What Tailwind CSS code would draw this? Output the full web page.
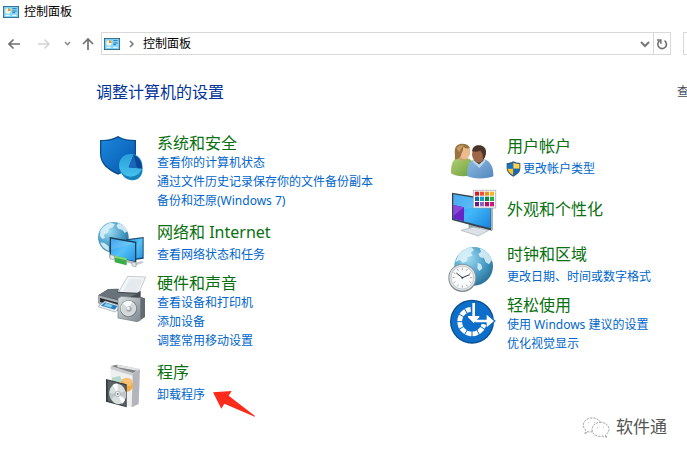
<!DOCTYPE html>
<html lang="zh-CN">
<head>
  <meta charset="UTF-8" />
  <title>控制面板</title>
  <meta name="viewport" content="width=device-width, initial-scale=1.0" />
  <script src="https://cdn.jsdelivr.net/npm/@tailwindcss/browser@4"></script>
</head>
<body class="relative min-h-screen overflow-hidden bg-white text-xs text-black font-['Noto_Sans','Noto_Sans_CJK_SC',sans-serif]">
  <!-- shared panel icon -->
  <svg class="hidden">
    <symbol id="panel" viewBox="0 0 48 36">
      <rect x="1" y="1" width="46" height="34" fill="#6fc7ee" stroke="#245f86" stroke-width="3" />
      <rect x="4" y="4" width="40" height="28" fill="#8bd8f8" />
      <circle cx="15" cy="15" r="8" fill="#f4f4e0" />
      <path d="M15 15V6a9 9 0 0 1 8 9z" fill="#e99a2c" />
      <path d="M28 8h13M28 15h13M28 20h8" stroke="#2478ae" stroke-width="3" />
      <path d="M8 28h12M28 28h12" stroke="#f7fdff" stroke-width="3" />
    </symbol>
  </svg>

  <header class="flex h-6 items-center gap-[5px] pl-[3px]">
    <svg class="h-3 w-4"><use href="#panel" /></svg>
    <h1>控制面板</h1>
  </header>

  <nav class="mt-2 flex h-[23px] items-center">
    <div class="flex w-[101px] shrink-0 items-center pl-2">
      <button aria-label="后退"><svg class="h-3 w-3" viewBox="0 0 12 12" fill="none" stroke="#707070" stroke-width="1.6"><path d="M12 6H1M5.500 1.500L1 6l4.500 4.500" /></svg></button>
      <button aria-label="前进" class="ml-[18px]"><svg class="h-3 w-3" viewBox="0 0 12 12" fill="none" stroke="#d2d2d2" stroke-width="1.500"><path d="M0 6h11M6.500 1.500L11 6l-4.500 4.500" /></svg></button>
      <button aria-label="最近浏览的位置" class="ml-3.5"><svg class="h-2 w-2" viewBox="0 0 8 8" fill="none" stroke="#888" stroke-width="1.500"><path d="M1 2l2.500 2.700L6 2" /></svg></button>
      <button aria-label="向上" class="ml-2.5"><svg class="h-3 w-3" viewBox="0 0 12 12" fill="none" stroke="#707070" stroke-width="1.700"><path d="M6 12V1M1 6l5-5 5 5" /></svg></button>
    </div>
    <div class="flex h-full flex-1 items-center border border-[#d9d9d9] pl-[2px]">
      <svg class="h-3 w-4"><use href="#panel" /></svg>
      <svg class="ml-2 h-2 w-2" viewBox="0 0 8 8" fill="none" stroke="#777" stroke-width="1.500"><path d="M2 1l3 3-3 3" /></svg>
      <a href="#" class="ml-[7px] leading-5">控制面板</a>
      <button aria-label="以前的位置" class="ml-auto mr-[3px]"><svg class="h-2 w-2.5" viewBox="0 0 10 8" fill="none" stroke="#777" stroke-width="2"><path d="M1 2l4 4 4-4" /></svg></button>
      <button aria-label="刷新" class="flex h-full w-[17px] items-center justify-center border-l border-[#d9d9d9]">
        <svg class="h-3 w-3" viewBox="0 0 12 12" fill="none" stroke="#707070" stroke-width="1.600"><path d="M8.500 2.700a4.300 4.300 0 1 1-5 .2M1 2h3.800v3.800" /></svg>
      </button>
    </div>
    <input type="search" aria-label="搜索控制面板" class="ml-3 h-full w-1 border border-r-0 border-[#d9d9d9]" />
  </nav>

  <main class="pl-24">
    <div class="flex h-5 mt-[27px] items-center justify-between">
      <h2 class="text-base leading-5 text-[#003399]">调整计算机的设置</h2>
      <span class="w-2.5 overflow-hidden whitespace-nowrap leading-5 text-[#444c58]">查看方式:</span>
    </div>

    <div class="mt-[31px] grid grid-cols-[350fr_241fr] text-[#0066cc]">
      <ul class="flex flex-col gap-[9px] whitespace-nowrap">
        <li class="flex gap-[13px]">
          <svg class="-mb-1.5 h-12 w-12 shrink-0 overflow-visible" viewBox="18 24 144 144">
            <defs>
              <linearGradient id="shield" x1="0" y1="0" x2="1" y2="1"><stop stop-color="#1988dc" /><stop offset="1" stop-color="#0757ad" /></linearGradient>
              <linearGradient id="disk" x1="0" y1="0" x2="0" y2="1"><stop stop-color="#2a9fdc" /><stop offset="1" stop-color="#45c0ec" /></linearGradient>
            </defs>
            <path d="M30 45C52 46 68 41 84 33c16 9 32 12 54 12v42c0 30-24 49-54 62-30-13-54-32-54-62z" fill="#084e8d" />
            <path d="M34 48c20 1 36-3 50-10 15 7 30 10 50 10v39c0 27-21 44-50 57-29-13-50-30-50-57z" fill="url(#shield)" />
            <path d="M88 124c2 34 32 50 55 38 13-8 17-23 13-38z" fill="#1784bd" />
            <ellipse cx="122" cy="121" rx="35" ry="34" fill="url(#disk)" />
            <path d="M116 127l15-38c16 6 26 22 26 42z" fill="#0a4893" />
            <path d="M116 127l15-38 10 40z" fill="#1966ba" />
          </svg>
          <div class="pb-[3px]">
            <h3 class="text-base leading-5 text-[#08700f]"><a href="#">系统和安全</a></h3>
            <a href="#" class="block leading-[19px]">查看你的计算机状态</a>
            <a href="#" class="block leading-[19px]">通过文件历史记录保存你的文件备份副本</a>
            <a href="#" class="block leading-[19px]">备份和还原(Windows 7)</a>
          </div>
        </li>
        <li class="flex gap-[13px]">
          <svg class="-mb-1.5 h-12 w-12 shrink-0 overflow-visible" viewBox="18 21 144 144">
            <defs>
              <radialGradient id="globe" cx=".35" cy=".3" r=".8"><stop stop-color="#a4dcf2" /><stop offset=".55" stop-color="#4a9fc9" /><stop offset="1" stop-color="#25698f" /></radialGradient>
              <linearGradient id="screen" x1="0" y1="0" x2="1" y2="1"><stop stop-color="#2695e8" /><stop offset=".5" stop-color="#55c1f8" /><stop offset="1" stop-color="#2493e0" /></linearGradient>
            </defs>
            <circle cx="70" cy="67" r="46" fill="url(#globe)" />
            <path d="M31 47c8-13 20-22 33-24l11 5-8 10-10 3-4 12-11 6 3 9-7 4-8-8zM85 24c14 5 23 13 28 25l-9 5-7-9-11-3-7-9zM31 82l12 2 13 10 1 15C43 103 34 94 31 82z" fill="#e1f3f9" opacity=".85" />
            <path d="M108 73l53-7v65l-53 8z" fill="#1b4b70" />
            <path d="M112 76l46-6v57l-46 7z" fill="url(#screen)" />
            <path d="M59 66l80 14v65l-80-18z" fill="#173e5c" />
            <path d="M63 71l72 13v55l-72-16z" fill="url(#screen)" />
            <path d="M63 71l72 13-72 20z" fill="#fff" opacity=".14" />
            <path d="M59 125l84 22" stroke="#b8c0c4" stroke-width="8" />
            <path d="M74 122l36 8v21l-36-9z" fill="#38ad48" />
            <path d="M74 122l36 8v6l-36-8z" fill="#7bdb7c" />
            <path d="M60 119l13 3v13l-13-4zM126 140l12 4v12l-12-4z" fill="#e4e8e9" stroke="#929b9f" stroke-width="2" />
            <path d="M140 142l17-4 4 5-18 6z" fill="#c5cbd0" />
          </svg>
          <div>
            <h3 class="mb-[3px] text-base leading-5 text-[#08700f]"><a href="#">网络和 Internet</a></h3>
            <a href="#" class="block leading-[19px]">查看网络状态和任务</a>
          </div>
        </li>
        <li class="flex gap-[13px]">
          <svg class="-mb-1.5 h-12 w-12 shrink-0 overflow-visible" viewBox="18 174 144 144">
            <defs>
              <linearGradient id="steel" x1="0" y1="0" x2="1" y2="1"><stop stop-color="#dce1e4" /><stop offset="1" stop-color="#7d878d" /></linearGradient>
            </defs>
            <path d="M113 184l54 2-22 51-61-3z" fill="#f3f6f8" stroke="#a9b0b5" stroke-width="2" />
            <path d="M119 191l40 1-17 39-43-2z" fill="#e4eaee" />
            <path d="M25 241l30-19 31-1-2 9 58 3 10-6v49l-67 11-60-24z" fill="#444d53" />
            <path d="M25 241l30-19 31 1-4 10 60 4-50 18z" fill="#687279" />
            <path d="M25 241l66 16v31l-66-20z" fill="#a5adb2" />
            <path d="M30 249l56 15v12l-56-15z" fill="#242b30" />
            <path d="M45 258l47 14-16 19-52-16z" fill="#f2f5f7" stroke="#98a2a9" stroke-width="2" />
            <path d="M45 262l38 11-9 11-41-12z" fill="#2e7fc2" />
            <path d="M48 264l20 6-5 8-22-6z" fill="#82cbe8" />
            <path d="M136 251l15-6 14 5v56l-13 9z" fill="#626b70" />
            <path d="M84 250l11-6 57 5-1 67-10 4-57-11z" fill="url(#steel)" stroke="#727a7e" stroke-width="2" />
            <circle cx="116" cy="281" r="26" fill="#7c878d" />
            <circle cx="115" cy="280" r="22" fill="#d1d7da" stroke="#f5f7f8" stroke-width="2" />
            <path d="M98 266a22 22 0 0 1 29-4l-12 18z" fill="#f8fafb" />
            <circle cx="117" cy="282" r="8" fill="#a0a9ad" />
            <circle cx="115" cy="280" r="5" fill="#eef1f2" />
          </svg>
          <div class="pb-[3px]">
            <h3 class="text-base leading-5 text-[#08700f]"><a href="#">硬件和声音</a></h3>
            <a href="#" class="block leading-[19px]">查看设备和打印机</a>
            <a href="#" class="block leading-[19px]">添加设备</a>
            <a href="#" class="block leading-[19px]">调整常用移动设置</a>
          </div>
        </li>
        <li class="flex gap-[13px]">
          <svg class="-mb-1.5 h-12 w-12 shrink-0 overflow-visible" viewBox="18 36 144 144">
            <path d="M62 50l66 19-3 103-63-26z" fill="#efeff0" />
            <path d="M62 48l20-4 67 14-22 12z" fill="#7d8185" />
            <path d="M82 44l68 12v8l-68-12z" fill="#dfe1e3" />
            <path d="M62 48l66 20v9L62 57z" fill="#c9cccf" />
            <path d="M128 70l22-12-4 104-21 10z" fill="#b3b5ba" />
            <path d="M66 83l24-5 8 18-32 2z" fill="#b4d8c8" />
            <circle cx="110" cy="106" r="19" fill="#f2ab48" />
            <path d="M95 88q18-10 31 2l-2 18-16-2z" fill="#f7c273" />
            <path d="M48 87l62 16v69l-62-17z" fill="#343a3d" />
            <path d="M53 91l54 15v62l-54-15z" fill="#5b6367" />
            <ellipse cx="83" cy="132" rx="25" ry="31" transform="rotate(-13 83 132)" fill="#d9dedf" />
            <path d="M83 132L68 105q7-5 15-4zM83 132l13 29q6-3 9-11z" fill="#fff" />
            <path d="M83 132l-24-3q0 11 5 18zM83 132l23-9q4 10 1 21z" fill="#bfc7ca" />
            <circle cx="83" cy="132" r="8" fill="#f5f7f7" stroke="#899397" stroke-width="2" />
            <circle cx="83" cy="132" r="3" fill="#6f797d" />
          </svg>
          <div>
            <h3 class="mb-[3px] text-base leading-5 text-[#08700f]"><a href="#">程序</a></h3>
            <div class="flex h-[19px] gap-2">
              <a href="#" class="leading-[19px]">卸载程序</a>
              <svg class="mt-1.5 h-[26px] w-[42px]" viewBox="0 0 126 78"><path d="M0 4l56-4-9 14 79 61-1 2-91-39-9 15z" fill="#fb2b1b" /></svg>
            </div>
          </div>
        </li>
      </ul>

      <ul class="mt-[3px] flex flex-col gap-[9px] whitespace-nowrap">
        <li class="flex gap-[13px]">
          <svg class="-mb-1.5 h-12 w-12 shrink-0 overflow-visible" viewBox="18 18 144 144">
            <defs>
              <linearGradient id="green" x1="0" y1="0" x2="1" y2="1"><stop stop-color="#b4d178" /><stop offset="1" stop-color="#679c37" /></linearGradient>
              <linearGradient id="blue" x1="0" y1="0" x2="1" y2="1"><stop stop-color="#8fbbe2" /><stop offset="1" stop-color="#5288bf" /></linearGradient>
            </defs>
            <path d="M33 130c-1-28 6-44 24-48l26 3c15 4 23 18 23 45-15 11-57 13-73 0z" fill="url(#green)" />
            <path d="M58 76h22v11q-9 11-22-1z" fill="#d09b6d" />
            <ellipse cx="73" cy="65" rx="18" ry="23" fill="#edba8d" />
            <path d="M44 88c4-11-5-30 6-41 13-11 35-6 40 7-8 3-15 1-20-4 0 12-5 17-7 26-3 9-9 13-19 12z" fill="#9a7440" />
            <path d="M50 56q8-13 22-9-10 5-14 20z" fill="#c79d61" />
            <path d="M81 138c-1-28 6-46 23-49l28-1c19 5 29 23 28 51-18 8-62 9-79-1z" fill="url(#blue)" />
            <path d="M105 85l25-2v10l-13 11-13-10z" fill="#7b4c32" />
            <path d="M101 91l16 13 16-15 4 4-19 21-20-19z" fill="#bcd6ed" />
            <ellipse cx="115" cy="73" rx="19" ry="24" fill="#9c6846" />
            <path d="M96 64c2-15 12-20 25-18 18 4 21 20 13 38l-5 5c1-16-3-21-8-27-9 4-17 4-25 2z" fill="#4b352b" />
          </svg>
          <div>
            <h3 class="mb-[3px] text-base leading-5 text-[#08700f]"><a href="#">用户帐户</a></h3>
            <a href="#" class="flex items-center gap-0.5 leading-[19px]">
              <svg class="-ml-px h-4 w-[15px]" viewBox="0 0 45 48">
                <path d="M2 6Q15 6 22 1q8 5 21 5v16q0 15-21 25Q2 37 2 22z" fill="#355c7d" />
                <path d="M5 9q10 0 17-4v18H5z" fill="#1673c5" /><path d="M22 5q8 4 18 4v14H22z" fill="#ffd34c" />
                <path d="M5 23h17v20Q6 35 5 23z" fill="#ffc42e" /><path d="M22 23h18q-1 12-18 20z" fill="#1768b5" />
              </svg>
              更改帐户类型
            </a>
          </div>
        </li>
        <li class="flex h-12 gap-[13px]">
          <svg class="-mb-1.5 h-12 w-12 shrink-0 overflow-visible" viewBox="18 171 144 144">
            <defs>
              <linearGradient id="desktop" x1="0" y1="0" x2="1" y2="1"><stop stop-color="#2f9bec" /><stop offset=".5" stop-color="#42b7f9" /><stop offset="1" stop-color="#1682dc" /></linearGradient>
            </defs>
            <path d="M86 281l34 8v16l-34-5z" fill="#9aa4ad" />
            <path d="M63 301l38-10 45 10-31 17z" fill="#dce1e5" stroke="#a5adb4" stroke-width="2" />
            <path d="M36 188l120 20v94L36 270z" fill="#35434e" />
            <path d="M153 208l6-2v94l-6 3z" fill="#aab3ba" />
            <path d="M40 193l112 19v83L40 266z" fill="url(#desktop)" />
            <path d="M40 193l112 19v17L40 240z" fill="#fff" opacity=".13" />
            <path d="M40 225l32 7v42l-32-8z" fill="#6825c4" />
            <path d="M40 225l32 7-32 26z" fill="#8b46da" />
            <path d="M100 181h67v53h-67z" fill="#fff" stroke="#909ba4" stroke-width="2" />
            <path d="M105 185h12v12h-12z" fill="#d81924" /><path d="M120 185h12v12h-12z" fill="#ec4e36" /><path d="M135 185h12v12h-12z" fill="#f38b1e" /><path d="M150 185h12v12h-12z" fill="#f5b51a" />
            <path d="M105 200h12v13h-12z" fill="#156ab2" /><path d="M120 200h12v13h-12z" fill="#159cc3" /><path d="M135 200h12v13h-12z" fill="#168342" /><path d="M150 200h12v13h-12z" fill="#25af54" />
            <path d="M105 216h12v13h-12z" fill="#651b85" /><path d="M120 216h12v13h-12z" fill="#8e65bd" /><path d="M135 216h12v13h-12z" fill="#b80b6e" /><path d="M150 216h12v13h-12z" fill="#d4147a" />
          </svg>
          <h3 class="-mt-1 self-center text-base leading-5 text-[#08700f]"><a href="#">外观和个性化</a></h3>
        </li>
        <li class="flex gap-[13px]">
          <svg class="-mb-1.5 h-12 w-12 shrink-0 overflow-visible" viewBox="18 12 144 144">
            <circle cx="101" cy="79" r="58" fill="url(#globe)" />
            <path d="M56 43c10-12 25-20 39-21l7 8-9 8 5 9-15 5-3 12-12 5-9-9-13 7zM119 25c18 6 31 18 37 35l-9 13-10-6-5-13-12-2-5-10 8-7zM113 68l10 5 4 12-9 8-6-8z" fill="#e1f3f9" opacity=".85" />
            <circle cx="67" cy="114" r="42" fill="#858d92" />
            <circle cx="67" cy="113" r="39" fill="#dfe3e5" />
            <circle cx="67" cy="113" r="34" fill="#f9fafa" stroke="#b1b8bb" stroke-width="2" />
            <path d="M67 83v7M67 136v7M37 113h7M90 113h7M52 87l3 5M79 134l3 5M41 98l5 3M88 125l5 3M82 87l-3 5M55 134l-3 5M93 98l-5 3M46 125l-5 3" stroke="#788187" stroke-width="2" />
            <path d="M49 99l18 14 22-9" fill="none" stroke="#353c40" stroke-width="3" />
            <circle cx="67" cy="113" r="3" fill="#353c40" />
          </svg>
          <div>
            <h3 class="mb-[3px] text-base leading-5 text-[#08700f]"><a href="#">时钟和区域</a></h3>
            <a href="#" class="block leading-[19px]">更改日期、时间或数字格式</a>
          </div>
        </li>
        <li class="flex gap-[13px]">
          <svg class="-mb-1.5 h-12 w-12 shrink-0 overflow-visible" viewBox="18 165 144 144">
            <circle cx="96" cy="245" r="66" fill="#0b4f91" />
            <circle cx="96" cy="245" r="62" fill="#0d6fc9" />
            <path d="M92 208a37 37 0 1 0 40 45" fill="none" stroke="#fff" stroke-width="14" />
            <path d="M96 273v19M110 269l9 16M120 259l17 10M82 269l-9 16M72 259l-17 10M68 245H49M72 231l-17-10M82 221l-9-16" stroke="#0d6fc9" stroke-width="3" />
            <path d="M101 189v53M86 232l15 17 15-17M103 243h50M141 229l16 14-16 14" fill="none" stroke="#0d6fc9" stroke-width="14" />
            <path d="M101 189v53M106 243h46" stroke="#fff" stroke-width="8" />
            <path d="M84 232l17 17 17-17v-4H84zM140 224l22 19-22 19z" fill="#fff" />
          </svg>
          <div class="pb-[3px]">
            <h3 class="text-base leading-5 text-[#08700f]"><a href="#">轻松使用</a></h3>
            <a href="#" class="block leading-[19px]">使用 Windows 建议的设置</a>
            <a href="#" class="block leading-[19px]">优化视觉显示</a>
          </div>
        </li>
      </ul>
    </div>
  </main>

  <!-- watermark -->
  <div class="absolute right-5 bottom-[18px] flex items-center gap-1.5 text-[17px] leading-6 text-[#555]">
    <svg class="h-6 w-7" viewBox="0 0 84 72" fill="#fff" stroke="#777" stroke-width="2" stroke-dasharray="7 3">
      <path d="M17 50l-8 7 2-12C-3 32 5 11 27 9c18-2 30 9 30 20 0 14-16 25-40 21z" />
      <path d="M70 60l6 7-14-4c-18 4-32-5-32-19 0-13 11-22 25-22 26 0 35 25 15 38z" />
      <path d="M20 23h1M38 23h1M47 38h1M64 38h1" stroke-width="4" stroke-dasharray="none" />
    </svg>
    <span>软件通</span>
  </div>
</body>
</html>
